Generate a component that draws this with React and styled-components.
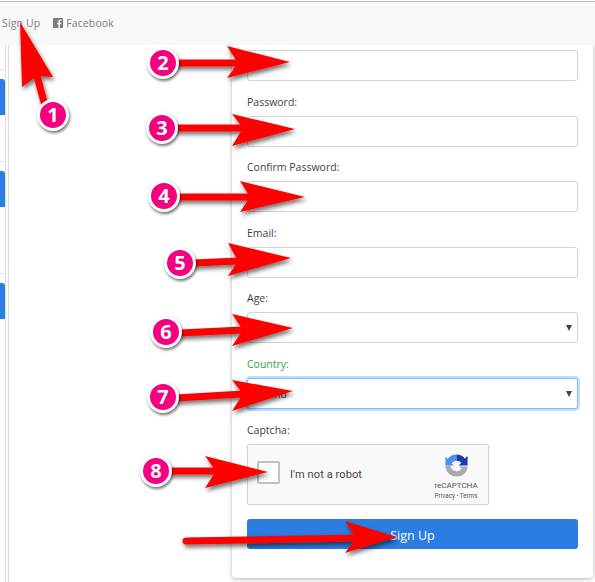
import React from 'react';
import styled, { createGlobalStyle } from 'styled-components';

const Global = createGlobalStyle`
  html, body { margin: 0; padding: 0; background: #fff; }
  * { box-sizing: border-box; }
`;

const Page = styled.div`
  position: relative;
  width: 595px;
  height: 582px;
  overflow: hidden;
  background: #fff;
  font-family: "Open Sans", "Liberation Sans", sans-serif;
  color: #3a3f44;
`;

const Navbar = styled.nav`
  position: relative;
  z-index: 2;
  height: 44px;
  margin-top: 1px;
  margin-bottom: -1px;
  border-top: 1px solid #bdbdbd;
  background: #f7f8fa;
  display: flex;
  align-items: center;
  padding: 0 0 2px 2px;
  gap: 13px;
  font-size: 10.5px;
  color: #7b7f83;
`;

const NavLink = styled.a`
  display: inline-flex;
  align-items: center;
  gap: 3px;
  letter-spacing: 0.12px;
`;

const Body = styled.div`
  display: flex;
  height: 538px;
`;

const Sidebar = styled.aside`
  width: 6px;
  flex: none;
  display: flex;
  flex-direction: column;
  gap: 9px;
  border-right: 1px solid #dcdcdc;
`;

const SideCard = styled.div`
  height: ${p => p.$h}px;
  flex: ${p => (p.$grow ? '1' : 'none')};
  background: #fff;
  border-bottom: ${p => (p.$grow ? '0' : '1px solid #dcdcdc')};
  border-radius: 0 0 3px 0;
`;

const SideHeader = styled.div`
  height: 36px;
  background: #2a7de1;
  border-radius: 0 3px 0 0;
`;

const Rule = styled.div`
  width: 1px;
  flex: none;
  margin-left: 2px;
  background: #dcdcdc;
`;

const Main = styled.main`
  flex: 1;
  padding-left: 223px;
  padding-right: 2px;
`;

const FormCard = styled.section`
  width: 361px;
  height: 534px;
  padding: 6px 15px 0 15px;
  background: #fff;
  border-radius: 0 0 4px 4px;
  box-shadow: 0 1px 4px rgba(0, 0, 0, 0.3);
`;

const Field = styled.div`
  margin-bottom: 9.6px;
`;

const Label = styled.label`
  display: block;
  height: 20px;
  margin-bottom: 5px;
  font-size: 10.5px;
  line-height: 23px;
  color: ${p => (p.$ok ? '#28a745' : '#3a3f44')};
`;

const Input = styled.div`
  position: relative;
  height: 31px;
  padding: 2px 5px 0;
  display: flex;
  align-items: center;
  font-size: 10.5px;
  color: #495057;
  background: #fff;
  border: 1px solid ${p => (p.$focus ? '#80bdff' : '#ced4da')};
  border-radius: 3px;
  box-shadow: ${p => (p.$focus ? '0 0 0 2px rgba(0, 123, 255, 0.25)' : 'none')};
`;

const Caret = styled.span`
  position: absolute;
  right: 5px;
  top: 12px;
  width: 0;
  height: 0;
  border-left: 3px solid transparent;
  border-right: 3px solid transparent;
  border-top: 6px solid #444;
`;

const Captcha = styled.div`
  width: 242px;
  height: 61.400px;
  display: flex;
  align-items: center;
  padding: 0 0 3px 9px;
  background: #f9f9f9;
  border: 1px solid #d3d3d3;
  border-radius: 2px;
  box-shadow: 0 0 2px rgba(0, 0, 0, 0.08);
`;

const CheckBox = styled.div`
  width: 23px;
  height: 23px;
  flex: none;
  background: #fff;
  border: 2px solid #c1c1c1;
  border-radius: 2px;
`;

const RobotText = styled.span`
  margin: 3px 0 0 10px;
  flex: 1;
  font-family: Roboto, "Liberation Sans", sans-serif;
  font-size: 11px;
  letter-spacing: 0.1px;
  color: #444;
`;

const Brand = styled.div`
  width: 62px;
  flex: none;
  display: flex;
  flex-direction: column;
  align-items: center;
  margin-top: 9px;
  margin-right: 1px;
  color: #555;
  font-family: Roboto, "Liberation Sans", sans-serif;
`;

const BrandName = styled.span`
  font-size: 8px;
  line-height: 10px;
  margin-top: 4px;
`;

const BrandLinks = styled.span`
  font-size: 6.300px;
  line-height: 10px;
`;

const SubmitButton = styled.button`
  display: block;
  width: 100%;
  height: 30px;
  margin-top: 14px;
  padding: 3px 0 0;
  border: 0;
  border-radius: 3px;
  background: #2a7de1;
  color: #fff;
  font-family: inherit;
  font-size: 12.500px;
  text-align: center;
`;

const Overlay = styled.svg`
  position: absolute;
  z-index: 3;
  inset: 0;
  width: 595px;
  height: 582px;
  pointer-events: none;
`;

const Badge = styled.div`
  position: absolute;
  z-index: 4;
  left: ${p => p.$x - 16}px;
  top: ${p => p.$y - 16}px;
  width: 32px;
  height: 32px;
  display: flex;
  align-items: center;
  justify-content: center;
  border: 3px solid #fff;
  border-radius: 50%;
  background: #f5007f;
  box-shadow: 1px 2px 3px rgba(0, 0, 0, 0.55);
  color: #fff;
  font-family: "Open Sans", sans-serif;
  font-weight: 700;
  font-size: 20px;
  line-height: 1;
`;

const arrows = [
  { from: [44, 102], neck: [37, 76], tip: [20, 22], a: [22, 87], b: [53, 77] },
  { from: [176, 63], neck: [238, 63], tip: [290, 62], a: [227, 46], b: [227, 78] },
  { from: [176, 128], neck: [243, 128], tip: [295, 129], a: [232, 114], b: [232, 146] },
  { from: [178, 197], neck: [250, 197], tip: [305, 197], a: [240, 181], b: [240, 212] },
  { from: [194, 263], neck: [238, 261], tip: [291, 258], a: [228, 243], b: [228, 276] },
  { from: [180, 333], neck: [243, 330], tip: [293, 328], a: [232, 314], b: [232, 346] },
  { from: [176, 398], neck: [243, 394], tip: [293, 391], a: [232, 380], b: [232, 411] },
  { from: [170, 471], neck: [216, 471], tip: [268, 472], a: [205, 456], b: [205, 488] },
  { from: [186, 541], neck: [356, 538], tip: [397, 537], a: [345, 521], b: [345, 553] },
];

const badges = [
  [1, 53, 115], [2, 163, 63], [3, 162, 128], [4, 164, 196],
  [5, 180, 263], [6, 166, 332], [7, 163, 397], [8, 156, 471],
];

const sideCards = [{ h: 83 }, { h: 103 }, { grow: true }];
const plainFields = ['Password:', 'Confirm Password:', 'Email:'];

export default function App() {
  return (
    <Page>
      <Global />
      <Navbar>
        <NavLink>Sign Up</NavLink>
        <NavLink>
          <svg width="10" height="10" viewBox="0 0 10 10">
            <rect width="10" height="10" rx="0.6" fill="#7b7f83" />
            <path d="M6.9 10V6.2h1.2l.2-1.5H6.9v-1c0-.4.1-.7.7-.7h.8V1.7C8.200 1.700 7.800 1.600 7.300 1.600c-1.100 0-1.900.7-1.900 1.900v1.200H4.200v1.500h1.200V10z" fill="#f7f8fa" />
          </svg>
          Facebook
        </NavLink>
      </Navbar>
      <Body>
        <Sidebar>
          <SideCard $h={26} />
          {sideCards.map((c, i) => (
            <SideCard key={i} $h={c.h} $grow={c.grow}>
              <SideHeader />
            </SideCard>
          ))}
        </Sidebar>
        <Rule />
        <Main>
          <FormCard>
            <Field><Input /></Field>
            {plainFields.map(name => (
              <Field key={name}>
                <Label>{name}</Label>
                <Input />
              </Field>
            ))}
            <Field>
              <Label>Age:</Label>
              <Input><Caret /></Input>
            </Field>
            <Field>
              <Label $ok>Country:</Label>
              <Input $focus>Poland<Caret /></Input>
            </Field>
            <Label>Captcha:</Label>
            <Captcha>
              <CheckBox />
              <RobotText>I'm not a robot</RobotText>
              <Brand>
                <svg width="23" height="23" viewBox="0 0 26 26">
                  <path d="M13 0.500A12.500 12.500 0 0 0 3 5.500L0.500 3V13H10L7.500 10.500C9 8.500 11 7.500 13 7.500Z" fill="#4a90f2" />
                  <path d="M13 0.500A12.500 12.500 0 0 1 22.500 5L25.500 2V13H15.500L18.500 10A7 7 0 0 0 13 7.500Z" fill="#1c3aa9" />
                  <path d="M0.500 13H6.500A6.500 6.500 0 0 0 13 19.500C15.500 19.500 17.500 18.300 18.700 16.500L16 14H25.500C25.500 20.500 20 25.500 13 25.500S0.500 20 0.500 13Z" fill="#ababab" />
                </svg>
                <BrandName>reCAPTCHA</BrandName>
                <BrandLinks>Privacy - Terms</BrandLinks>
              </Brand>
            </Captcha>
            <SubmitButton>Sign Up</SubmitButton>
          </FormCard>
        </Main>
      </Body>
      <Overlay viewBox="0 0 595 582">
        <defs>
          <filter id="drop" x="-20%" y="-40%" width="150%" height="200%">
            <feDropShadow dx="1.500" dy="3" stdDeviation="2" floodColor="#000" floodOpacity="0.55" />
          </filter>
        </defs>
        {arrows.map((r, i) => (
          <g key={i} filter="url(#drop)">
            <line x1={r.from[0]} y1={r.from[1]} x2={r.neck[0]} y2={r.neck[1]} stroke="#f00" strokeWidth="7" strokeLinecap="round" />
            <polygon points={[r.tip, r.a, r.neck, r.b].map(p => p.join(',')).join(' ')} fill="#f00" />
          </g>
        ))}
      </Overlay>
      {badges.map(([n, x, y]) => (
        <Badge key={n} $x={x} $y={y}>{n}</Badge>
      ))}
    </Page>
  );
}
